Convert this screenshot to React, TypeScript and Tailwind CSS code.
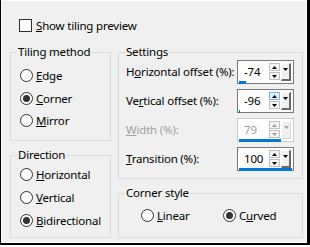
import React from "react";

const FONT = "font-['Segoe_UI','Noto_Sans',sans-serif]";

function Radio({ checked }: { checked?: boolean }) {
  return (
    <span className="w-[13px] h-[13px] rounded-full border border-[#333333] bg-white flex items-center justify-center shrink-0">
      {checked && <span className="w-[7px] h-[7px] rounded-full bg-[#333333]" />}
    </span>
  );
}

function RadioRow({ checked, children, className = "" }: { checked?: boolean; children: React.ReactNode; className?: string }) {
  return (
    <div className={`flex items-center gap-[3px] h-[13px] ${className}`}>
      <Radio checked={checked} />
      <span className="leading-[16px] whitespace-nowrap">{children}</span>
    </div>
  );
}

function Group({ label, className = "", children }: { label: string; className?: string; children: React.ReactNode }) {
  return (
    <div className={`relative border border-[#dcdcdc] ${className}`}>
      <span className="absolute -top-[9px] left-[6px] px-[1px] bg-[#f0f0f0] leading-[16px] whitespace-nowrap">{label}</span>
      {children}
    </div>
  );
}

function Arrow({ up, color }: { up?: boolean; color: string }) {
  return (
    <svg width="5" height="3" viewBox="0 0 5 3">
      {up ? <polygon points="0,3 5,3 2.5,0" fill={color} /> : <polygon points="0,0 5,0 2.5,3" fill={color} />}
    </svg>
  );
}

function Spinner({ value, pct, disabled, hoverUp }: { value: string; pct: number; disabled?: boolean; hoverUp?: boolean }) {
  const ac = disabled ? "#a0a0a0" : "#000000";
  return (
    <div className={`w-[57px] h-[24px] border ${disabled ? "border-[#cccccc]" : "border-[#7a7a7a]"} bg-white flex flex-col`}>
      <div className="flex-1 flex items-start pt-[1px]">
        <span className={`w-[31px] pl-[6px] leading-[18px] pt-[1px] ${disabled ? "text-[#a0a0a0]" : "text-black"}`}>{value}</span>
        <div className="flex flex-col gap-[1px] mt-[1px]">
          <div className={`w-[11px] h-[8px] border ${hoverUp ? "border-[#7eb4ea] bg-[#e5f1fb]" : "border-[#c0c0c0] bg-[#f4f4f4]"} flex items-center justify-center`}>
            <Arrow up color={ac} />
          </div>
          <div className="w-[11px] h-[8px] border border-[#c0c0c0] bg-[#f4f4f4] flex items-center justify-center">
            <Arrow color={ac} />
          </div>
        </div>
        <div
          className={`ml-[1px] mt-[1px] w-[10px] h-[18px] border-l border-t border-white ${disabled ? "border-r border-b border-r-[#d8d8d8] border-b-[#d8d8d8]" : "border-r-2 border-b-2 border-r-[#6a6a6a] border-b-[#6a6a6a]"} bg-[#f0f0f0] flex justify-center pt-[4px]`}
        >
          <Arrow color={ac} />
        </div>
      </div>
      <div className="px-[1px] pb-[1px] h-[4px]">
        <div className="h-[3px] bg-[#0078d7]" style={{ width: `${pct}%` }} />
      </div>
    </div>
  );
}

function SettingRow({ label, children, disabled }: { label: React.ReactNode; children: React.ReactNode; disabled?: boolean }) {
  return (
    <div className="flex items-center justify-between h-[24px]">
      <span className={`leading-[16px] whitespace-nowrap ${disabled ? "text-[#a0a0a0]" : ""}`}>{label}</span>
      {children}
    </div>
  );
}

export default function App() {
  return (
    <div className={`w-[310px] h-[247px] bg-white pb-[2px] text-[11.5px] tracking-[-0.2px] text-black ${FONT}`}>
      <div className="h-[245px] border-l border-r-[3px] border-b-2 border-black">
        <div className="h-full border border-white bg-[#f0f0f0] pt-[18px] pl-[8px]">
          <div className="flex items-center gap-[4px] h-[13px] ml-[9px]">
            <span className="w-[13px] h-[13px] border border-[#333333] bg-white shrink-0" />
            <span className="leading-[16px]">
              <u>S</u>how tiling preview
            </span>
          </div>
          <div className="flex gap-[7px] mt-[20px]">
            <div className="flex flex-col gap-[14px] w-[101px]">
              <Group label="Tiling method" className="h-[89px] pt-[16px] pl-[9px]">
                <RadioRow>
                  <u>E</u>dge
                </RadioRow>
                <RadioRow checked className="mt-[10px]">
                  <u>C</u>orner
                </RadioRow>
                <RadioRow className="mt-[9px]">
                  <u>M</u>irror
                </RadioRow>
              </Group>
              <Group label="Direction" className="h-[83px] pt-[12px] pl-[9px]">
                <RadioRow>
                  <u>H</u>orizontal
                </RadioRow>
                <RadioRow className="mt-[10px]">
                  <u>V</u>ertical
                </RadioRow>
                <RadioRow checked className="mt-[10px]">
                  <u>B</u>idirectional
                </RadioRow>
              </Group>
            </div>
            <div className="flex flex-col gap-[14px] w-[185px]">
              <Group label="Settings" className="h-[127px] pt-[7px] pl-[7px] pr-[8px]">
                <div className="flex flex-col gap-[5px]">
                  <SettingRow label={<>H<u>o</u>rizontal offset (%):</>}>
                    <Spinner value="-74" pct={13} />
                  </SettingRow>
                  <SettingRow label={<>Ve<u>r</u>tical offset (%):</>}>
                    <Spinner value="-96" pct={2} hoverUp />
                  </SettingRow>
                  <SettingRow disabled label={<><u>W</u>idth (%):</>}>
                    <Spinner value="79" pct={79} disabled />
                  </SettingRow>
                  <SettingRow label={<><u>T</u>ransition (%):</>}>
                    <Spinner value="100" pct={100} />
                  </SettingRow>
                </div>
              </Group>
              <Group label="Corner style" className="h-[45px] pt-[15px] pl-[22px]">
                <div className="flex">
                  <RadioRow className="w-[82px]">
                    <u>L</u>inear
                  </RadioRow>
                  <RadioRow checked>
                    C<u>u</u>rved
                  </RadioRow>
                </div>
              </Group>
            </div>
          </div>
        </div>
      </div>
    </div>
  );
}
